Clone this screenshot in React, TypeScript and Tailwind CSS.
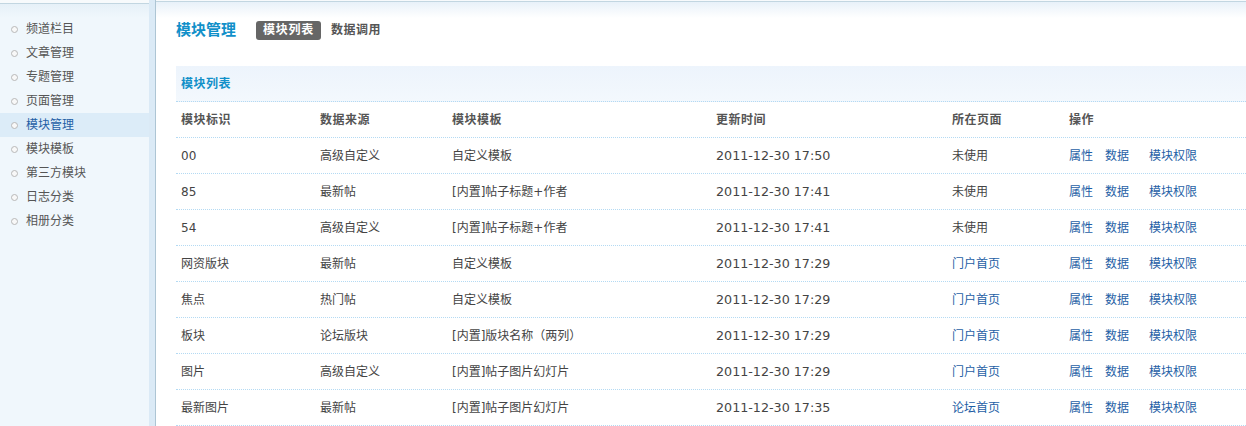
import React from "react";

const menu = ["频道栏目", "文章管理", "专题管理", "页面管理", "模块管理", "模块模板", "第三方模块", "日志分类", "相册分类"];

type Row = [string, string, string, string, string, boolean];
const rows: Row[] = [
  ["00", "高级自定义", "自定义模板", "2011-12-30 17:50", "未使用", false],
  ["85", "最新帖", "[内置]帖子标题+作者", "2011-12-30 17:41", "未使用", false],
  ["54", "高级自定义", "[内置]帖子标题+作者", "2011-12-30 17:41", "未使用", false],
  ["网资版块", "最新帖", "自定义模板", "2011-12-30 17:29", "门户首页", true],
  ["焦点", "热门帖", "自定义模板", "2011-12-30 17:29", "门户首页", true],
  ["板块", "论坛版块", "[内置]版块名称（两列）", "2011-12-30 17:29", "门户首页", true],
  ["图片", "高级自定义", "[内置]帖子图片幻灯片", "2011-12-30 17:29", "门户首页", true],
  ["最新图片", "最新帖", "[内置]帖子图片幻灯片", "2011-12-30 17:35", "论坛首页", true],
];

const grid = "grid grid-cols-[139px_132px_264px_236px_117px_1fr] items-center pl-[5px] h-9 border-b border-dotted border-[#b4daf3]";

export default function App() {
  return (
    <div className="flex h-[426px] w-[1246px] overflow-hidden bg-white font-['DejaVu_Sans','Noto_Sans_CJK_SC',sans-serif] text-[12px] text-[#444]">
      <aside className="flex w-[149px] shrink-0 flex-col">
        <div className="h-[3px] bg-[#f7fafc]" />
        <div className="flex-1 border-t border-[#c2d6e1] bg-[linear-gradient(#e6f0f8,#f0f7fc_14px)] pt-[13px]">
          {menu.map((m) => {
            const active = m === "模块管理";
            return (
              <div
                key={m}
                className={`flex h-6 items-center pl-[11px] ${active ? "bg-[#dcecf8] text-[#1f5fa6]" : "text-[#555]"}`}
              >
                <span className="mr-[8px] h-[7px] w-[7px] rounded-full border border-[#b8b8b8] bg-[#f8f8f8]" />
                <span>{m}</span>
              </div>
            );
          })}
        </div>
      </aside>
      <div className="w-[6px] shrink-0 bg-[#dbeaf6]" />
      <div className="w-px shrink-0 bg-[#adc5d4]" />
      <main className="flex min-w-0 flex-1 flex-col">
        <div className="h-[3px] bg-[#f7fafc]" />
        <div className="flex-1 border-t border-[#c2d6e1] bg-[linear-gradient(#e8f1f9,#ffffff_16px)] pl-5 pt-[18px]">
          <div className="flex h-5 items-center">
            <h1 className="w-[80px] text-[15px] font-bold text-[#1190c9]">模块管理</h1>
            <span className="flex h-[19px] items-center rounded-[3px] bg-[#666] px-[7px] font-bold tracking-[0.75px] text-white">
              模块列表
            </span>
            <span className="ml-[10px] font-bold tracking-[0.5px] text-[#555]">数据调用</span>
          </div>
          <div className="mt-[26px]">
            <div className="flex h-9 items-center border-b border-dotted border-[#b4daf3] bg-[linear-gradient(#edf4fc,#f3f8fd)] pl-[5px] pt-px font-bold tracking-[0.5px] text-[#1190c9]">
              模块列表
            </div>
            <div className={`${grid} pt-px font-bold tracking-[0.5px] text-[#555]`}>
              <span>模块标识</span>
              <span>数据来源</span>
              <span>模块模板</span>
              <span>更新时间</span>
              <span>所在页面</span>
              <span>操作</span>
            </div>
            {rows.map((r, i) => (
              <div key={i} className={`${grid} pt-px`}>
                <span>{r[0]}</span>
                <span>{r[1]}</span>
                <span>{r[2]}</span>
                <span className="text-[12.7px]">{r[3]}</span>
                <span className={r[5] ? "text-[#1f5fa6]" : ""}>{r[4]}</span>
                <span className="flex text-[#1f5fa6]">
                  <span className="mr-[12px]">属性</span>
                  <span className="mr-[20px]">数据</span>
                  <span>模块权限</span>
                </span>
              </div>
            ))}
          </div>
        </div>
      </main>
    </div>
  );
}
